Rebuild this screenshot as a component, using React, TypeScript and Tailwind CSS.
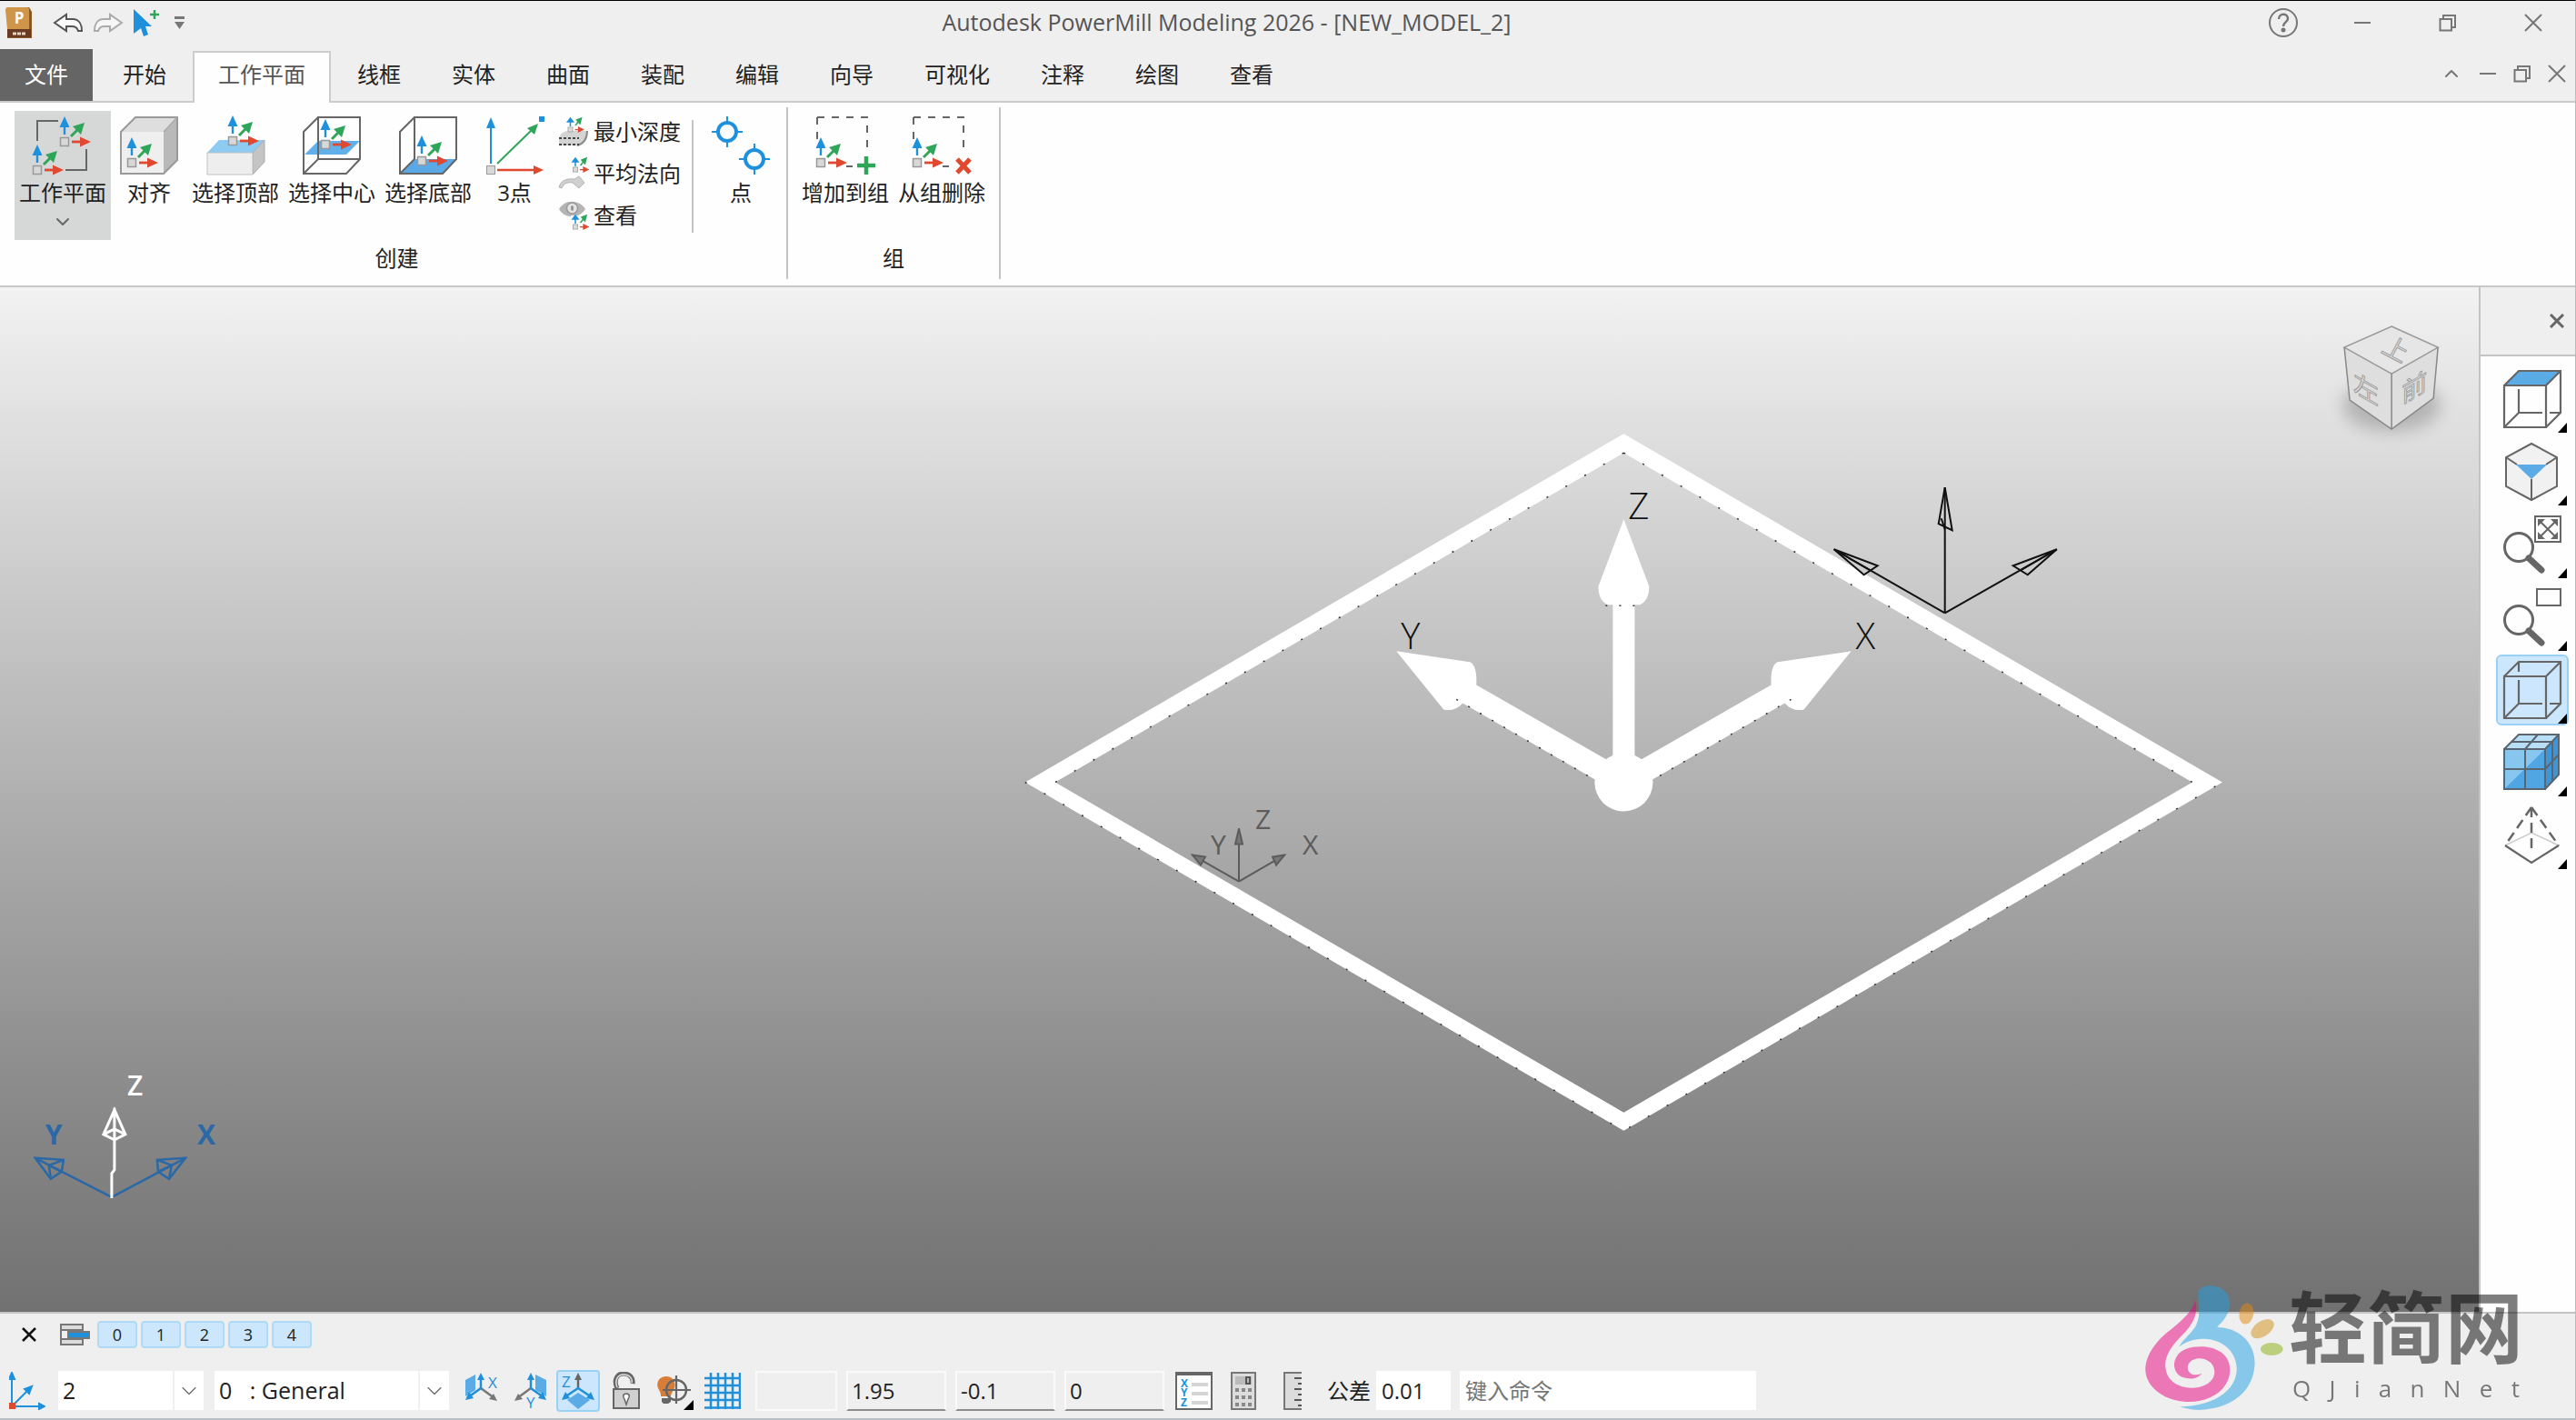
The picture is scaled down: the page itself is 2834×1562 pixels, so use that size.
import clsx from "clsx";
import { useState } from "react";
import type { ReactNode } from "react";
import { LuChevronDown, LuChevronUp } from "react-icons/lu";

const BLUE = "#1e90dc";
const GREEN = "#2fa55a";
const RED = "#e0492f";
const LINE = "#666666";

type IconProps = { children: ReactNode; size?: number };

const Icon = ({ children, size = 64 }: IconProps) => (
  <svg viewBox="0 0 64 64" width={size} height={size} fill="none" className="shrink-0 overflow-visible" aria-hidden="true">
    {children}
  </svg>
);

// origin square with the blue, green and red axis arrows
const Triad = ({ x, y }: { x: number; y: number }) => (
  <g transform={`translate(${x} ${y})`}>
    <path d="M0 -8V-18" stroke={BLUE} strokeWidth="2.4" />
    <path d="M-5.500 -16L0 -28L5.500 -16Z" fill={BLUE} />
    <path d="M7 -6L15 -14" stroke={GREEN} strokeWidth="3" />
    <path d="M9 -17L22 -21L18 -8Z" fill={GREEN} />
    <path d="M8 0H18" stroke={RED} strokeWidth="2.8" />
    <path d="M17 -5.500L29 0L17 5.500Z" fill={RED} />
    <rect x="-4.500" y="-4.500" width="9" height="9" fill="#d8d8d8" stroke="#999" strokeWidth="1.500" />
  </g>
);

const WorkplaneIcon = () => (
  <Icon>
    <path d="M27 5H4V27M58 36V59H35" stroke={LINE} strokeWidth="2" />
    <Triad x={34} y={28} />
    <Triad x={4} y={59} />
  </Icon>
);

const AlignIcon = () => (
  <Icon>
    <path d="M1 17L17 1H63L48 17Z" fill="#dedede" />
    <path d="M48 17L63 1V48L48 63Z" fill="#b9b9b9" />
    <path d="M1 17H48V63H1Z" fill="#efefef" />
    <path d="M1 17L17 1H63V48L48 63H1Z" stroke="#999" strokeWidth="2" />
    <path d="M48 17L63 1" stroke="#aaa" strokeWidth="1.500" />
    <Triad x={13} y={51} />
  </Icon>
);

const TopIcon = () => (
  <Icon>
    <path d="M1 40L14 26H64L51 40Z" fill="#8ecbf3" />
    <path d="M51 40L64 26V50L51 64Z" fill="#c4c4c4" stroke="#aaa" />
    <path d="M1 40H51V64H1Z" fill="#eeeeee" stroke="#c0c0c0" />
    <Triad x={29} y={27} />
  </Icon>
);

const BoxOutline = () => (
  <path d="M17 47V1H63V47L48 63H1V17L17 1M1 63L17 47H63" stroke={LINE} strokeWidth="2" />
);

const CentreIcon = () => (
  <Icon>
    <path d="M2 42L17 27H63L48 42Z" fill="#62b0ea" />
    <BoxOutline />
    <Triad x={25} y={31} />
  </Icon>
);

const BottomIcon = () => (
  <Icon>
    <path d="M2 63L17 47H63L48 63Z" fill="#5aa9e6" />
    <path d="M17 47V1H63V47L48 63H1V17L17 1M1 63L17 47" stroke={LINE} strokeWidth="2" />
    <Triad x={25} y={49} />
  </Icon>
);

const ThreePointIcon = () => (
  <Icon>
    <path d="M6 52V10" stroke={BLUE} strokeWidth="2" />
    <path d="M1 13L6 1L11 13Z" fill={BLUE} />
    <path d="M13 52L52 14" stroke={GREEN} strokeWidth="2" />
    <path d="M46 13L58 8L54 20Z" fill={GREEN} />
    <path d="M13 59H54" stroke={RED} strokeWidth="2.500" />
    <path d="M53 54L64 59L53 64Z" fill={RED} />
    <rect x="1.500" y="54.500" width="9" height="9" fill="#d8d8d8" stroke="#999" />
    <rect x="59" y="0" width="6" height="6" fill={BLUE} />
  </Icon>
);

const PointIcon = () => (
  <Icon>
    {[17, 47].map((c) => (
      <g key={c} stroke={BLUE}>
        <circle cx={c} cy={c} r="10" strokeWidth="4" />
        <path d={`M${c} ${c - 17}v8M${c} ${c + 9}v8M${c - 17} ${c}h8M${c + 9} ${c}h8`} strokeWidth="2" />
      </g>
    ))}
  </Icon>
);

const GroupFrame = () => (
  <>
    <path d="M1 1H56V42M1 1V28M33 55H40" stroke={LINE} strokeWidth="2" strokeDasharray="8 8" />
    <Triad x={5} y={51} />
  </>
);

const AddGroupIcon = () => (
  <Icon>
    <GroupFrame />
    <path d="M55 44V64M45 54H65" stroke={GREEN} strokeWidth="4.500" />
  </Icon>
);

const RemoveGroupIcon = () => (
  <Icon>
    <GroupFrame />
    <path d="M49 47L63 62M63 47L49 62" stroke={RED} strokeWidth="5" />
  </Icon>
);

const MiniTriad = ({ x, y }: { x: number; y: number }) => (
  <g transform={`translate(${x} ${y})`}>
    <path d="M0 -6V-18M-6 -16L0 -24L6 -16Z" stroke={BLUE} fill={BLUE} strokeWidth="3" />
    <path d="M11 -8L19 -18M14 -20L24 -24L21 -12Z" stroke={GREEN} fill={GREEN} strokeWidth="3" />
    <path d="M10 1H20M18 -4L28 1L18 6Z" stroke={RED} fill={RED} strokeWidth="2.500" />
    <rect x="-5" y="-4" width="10" height="10" fill="#ddd" stroke="#aaa" strokeWidth="2" />
  </g>
);

const MinDepthIcon = () => (
  <Icon size={32}>
    <path d="M2 48C4 36 12 30 24 30H64C64 46 56 58 42 62H2Z" fill="#d4d4d4" />
    <path d="M64 30C64 46 56 58 42 62" stroke="#8a8a8a" strokeWidth="4" />
    <path d="M2 46H46M2 60H46" stroke="#444" strokeWidth="4" strokeDasharray="6 4" />
    <MiniTriad x={27} y={26} />
  </Icon>
);

const AverageNormalIcon = () => (
  <Icon size={32}>
    <path d="M2 62C6 48 16 42 36 44L46 38L58 52L46 64L32 52C20 50 12 54 8 64Z" fill="#cfcfcf" stroke="#b5b5b5" strokeWidth="2" />
    <MiniTriad x={38} y={22} />
  </Icon>
);

const ViewIcon = () => (
  <Icon size={32}>
    <path d="M2 18C14 -4 46 -4 60 18C46 40 14 40 2 18Z" fill="#b4b4b4" />
    <circle cx="31" cy="16" r="12" fill="#e4e4e4" stroke="#999" strokeWidth="3" />
    <path d="M31 11V21" stroke="#888" strokeWidth="5" />
    <path d="M28 32H64V64H28Z" fill="#fefefe" />
    <MiniTriad x={38} y={56} />
  </Icon>
);

const WindowControl = ({ kind }: { kind: "minimize" | "restore" | "close" }) => (
  <svg viewBox="0 0 20 20" width="20" height="20" fill="none" stroke="#777" strokeWidth="2" aria-hidden="true">
    {kind === "minimize" && <path d="M1 10H19" />}
    {kind === "restore" && <path d="M1.500 6H14V18.500H1.500ZM5 6V2H18V15H14" />}
    {kind === "close" && <path d="M1 1L19 19M19 1L1 19" />}
  </svg>
);

const TitleBar = () => (
  <header className="flex h-[53px] shrink-0 items-center text-[#555]">
    <div className="flex h-full w-[204px] shrink-0 items-center pb-1.5 pl-1.5">
      <svg viewBox="0 0 30 34" width="30" height="34" aria-hidden="true">
        <path d="M2 2Q2 0 4 0H26L29 5V34H2Z" fill="#8a5a26" />
        <path d="M0 3Q0 0 3 0H24Q26 0 26 3V24H2Z" fill="#cf9548" />
        <rect x="2" y="24" width="26" height="9" fill="#6b3a22" />
        <path d="M8 29H22" stroke="#e6d5c3" strokeWidth="3" strokeDasharray="4 1" />
        <text x="15" y="18" textAnchor="middle" fill="#fff" className="font-['Open_Sans',sans-serif] text-[17px] font-bold">P</text>
      </svg>
      <button aria-label="撤销" className="ml-[22px]">
        <svg viewBox="0 0 34 22" width="34" height="22" fill="#fafafa" stroke="#555" strokeWidth="2">
          <path d="M2 11L15 2V7H22C29 7 32 13 32 20H28C27 16 24 15 21 15H15V20Z" />
        </svg>
      </button>
      <button aria-label="重做" className="ml-2.5">
        <svg viewBox="0 0 34 22" width="34" height="22" fill="#f6f6f6" stroke="#aaa" strokeWidth="2">
          <path d="M32 11L19 2V7H12C5 7 2 13 2 20H6C7 16 10 15 13 15H19V20Z" />
        </svg>
      </button>
      <button aria-label="选择" className="ml-2.5">
        <svg viewBox="0 0 30 32" width="30" height="32">
          <path d="M1 1L21 20H14L17 29L12 31L9 22L1 28Z" fill={BLUE} />
          <path d="M24 2V12M19 7H29" stroke={GREEN} strokeWidth="2.500" />
        </svg>
      </button>
      <button aria-label="自定义快速访问工具栏" className="ml-4">
        <svg viewBox="0 0 11 14" width="11" height="14" fill="#777">
          <path d="M0 0H11V3H0ZM0 6H11L5.500 14Z" />
        </svg>
      </button>
    </div>
    <h1 className="flex-1 pb-1.5 text-center text-[25px]">Autodesk PowerMill Modeling 2026 - [NEW_MODEL_2]</h1>
    <div className="flex h-full shrink-0 items-center pr-9 pb-1.5">
      <button aria-label="帮助">
        <svg viewBox="0 0 34 34" width="34" height="34" fill="none" stroke="#777" strokeWidth="2">
          <circle cx="17" cy="17" r="15" />
          <path d="M12 13C12 6 22 6 22 12.500C22 16 17 16.500 17 21" strokeWidth="2.500" />
          <circle cx="17" cy="25" r="1.500" fill="#666" />
        </svg>
      </button>
      <div className="ml-15 flex gap-[74px]">
        <button aria-label="最小化"><WindowControl kind="minimize" /></button>
        <button aria-label="还原"><WindowControl kind="restore" /></button>
        <button aria-label="关闭"><WindowControl kind="close" /></button>
      </div>
    </div>
  </header>
);

const tabs = ["开始", "工作平面", "线框", "实体", "曲面", "装配", "编辑", "向导", "可视化", "注释", "绘图", "查看"];

const TabStrip = () => {
  const [active, setActive] = useState("工作平面");
  return (
    <nav className="flex h-[59px] shrink-0 border-b-2 border-[#cccccc] text-2xl">
      <button className="w-[102px] shrink-0 bg-[#656565] pb-0.5 text-white">文件</button>
      <div className="ml-[5px] flex flex-1">
        {tabs.map((tab) => (
          <button
            key={tab}
            onClick={() => setActive(tab)}
            className={clsx("shrink-0 whitespace-nowrap", {
              "mx-px -mb-0.5 mt-0.5 border-2 border-b-0 border-[#cccccc] bg-[#fefefe] px-[26px] pb-2 text-[#555]": tab === active,
              "px-7 pb-0.5 text-[#222]": tab !== active,
            })}
          >
            {tab}
          </button>
        ))}
      </div>
      <div className="flex shrink-0 items-center gap-[18px] pr-2.5 pb-1">
        <button aria-label="折叠功能区"><LuChevronUp className="h-6 w-6 text-[#777]" /></button>
        <button aria-label="最小化窗口"><WindowControl kind="minimize" /></button>
        <button aria-label="还原窗口"><WindowControl kind="restore" /></button>
        <button aria-label="关闭窗口"><WindowControl kind="close" /></button>
      </div>
    </nav>
  );
};

type ToolProps = { label: string; icon: ReactNode; active?: boolean; menu?: boolean; className?: string };

const Tool = ({ label, icon, active, menu, className }: ToolProps) => (
  <button
    className={clsx("flex h-[142px] flex-col items-center whitespace-nowrap pt-1.5", className ?? "px-[5px]", {
      "bg-[#d6d8d8]": active,
    })}
  >
    {icon}
    <span className="mt-1 leading-8">{label}</span>
    {menu && <LuChevronDown className="mt-1 h-6 w-6 text-[#666]" />}
  </button>
);

const SmallTool = ({ label, icon }: ToolProps) => (
  <button className="flex h-[46px] items-center gap-[7px] whitespace-nowrap">
    {icon}
    {label}
  </button>
);

type GroupProps = { label: string; children: ReactNode; className?: string };

const RibbonGroup = ({ label, children, className }: GroupProps) => (
  <section className={clsx("flex flex-col border-r-2 border-[#c4c4c4] pt-1", className)}>
    <div className="flex">{children}</div>
    <div className="mt-1 text-center leading-8">{label}</div>
  </section>
);

const Ribbon = () => (
  <div className="flex h-[203px] shrink-0 items-start border-b-2 border-[#c8c8c8] bg-[#fefefe] py-[5px] text-2xl text-[#222]">
    <RibbonGroup label="创建" className="h-[189px] pr-2 pl-4">
      <Tool label="工作平面" icon={<WorkplaneIcon />} active menu />
      <Tool label="对齐" icon={<AlignIcon />} className="px-2.5" />
      <Tool label="选择顶部" icon={<TopIcon />} />
      <Tool label="选择中心" icon={<CentreIcon />} />
      <Tool label="选择底部" icon={<BottomIcon />} />
      <Tool label="3点" icon={<ThreePointIcon />} className="px-2.5" />
      <div className="ml-1.5 flex flex-col pr-3">
        <SmallTool label="最小深度" icon={<MinDepthIcon />} />
        <SmallTool label="平均法向" icon={<AverageNormalIcon />} />
        <SmallTool label="查看" icon={<ViewIcon />} />
      </div>
      <div className="mt-2.5 h-31 w-0.5 bg-[#c4c4c4]" />
      <Tool label="点" icon={<PointIcon />} className="ml-2.5 px-2.5" />
    </RibbonGroup>
    <RibbonGroup label="组" className="h-[189px] px-2.5">
      <Tool label="增加到组" icon={<AddGroupIcon />} />
      <Tool label="从组删除" icon={<RemoveGroupIcon />} />
    </RibbonGroup>
  </div>
);

const ViewCube = () => (
  <g>
    <ellipse cx="2630" cy="446" rx="54" ry="28" fill="#000" opacity="0.2" filter="url(#soft)" />
    <path d="M2630 359L2681 382L2676 438L2630 472L2584 440L2578 382Z" fill="#dedede" />
    <path d="M2630 359L2681 382L2630 411L2578 382Z" fill="#e6e6e6" stroke="#999" strokeWidth="1.500" />
    <path d="M2578 382L2584 440L2630 472L2676 438L2681 382M2630 411V472" fill="none" stroke="#888" strokeWidth="1.500" />
    <g fill="#dedede" stroke="#a0a0a0" strokeWidth="1" textAnchor="middle" className="font-['Noto_Sans_CJK_SC',sans-serif] text-[28px]">
      <text transform="translate(2630 393) rotate(28)">上</text>
      <text transform="translate(2602 438) skewY(30)">左</text>
      <text transform="translate(2655 436) skewY(-30)">前</text>
    </g>
  </g>
);

const Scene = () => (
  <svg viewBox="0 316 2727 1126" preserveAspectRatio="xMidYMid slice" className="block h-full w-full">
    <defs>
      <filter id="soft" x="-50%" y="-50%" width="200%" height="200%">
        <feGaussianBlur stdDeviation="9" />
      </filter>
    </defs>
    <g fill="none" stroke="#5c5c5c" strokeWidth="2">
      <path d="M1363 969V911M1363 969L1312 940M1363 969L1413 940" />
      <path d="M1363 911L1359 928L1367 928ZM1312 940L1326 942L1321 951ZM1413 940L1400 942L1404 951Z" fill="#777" />
    </g>
    <path
      fillRule="evenodd"
      fill="#fff"
      d="M1786 477L2444 860L1786 1243L1128 860ZM1786 498L2411 860L1786 1223L1161 860Z"
    />
    <g fill="none" stroke="#333" strokeWidth="1.500" strokeDasharray="2 22">
      <path d="M1786 498L2411 860M1786 498L1161 860" />
      <path d="M1128 860L1786 1243L2444 860" />
    </g>
    <g fill="#fff">
      <path d="M1786 571L1814 645Q1814 660 1804 665H1798V840H1774V665H1768Q1758 660 1758 645Z" />
      <path d="M1536 716L1617 728Q1625 732 1624 753L1786 846L1770 866L1609 773Q1600 783 1588 780Z" />
      <path d="M2036 716L1955 728Q1947 732 1948 753L1786 846L1802 866L1963 773Q1972 783 1984 780Z" />
      <circle cx="1786" cy="860" r="32" />
    </g>
    <g fill="none" stroke="#333" strokeWidth="1.500" strokeDasharray="2 13">
      <path d="M1602 769L1755 858M1970 769L1817 858M1766 666H1806" />
    </g>
    <g fill="none" stroke="#111" strokeWidth="2">
      <path d="M2139 674V536M2139 674L2017 604M2139 674L2262 604" />
      <path d="M2139 536L2132 576L2147 583ZM2135 570L2139 582" />
      <path d="M2017 604L2065 622L2050 632ZM2017 604L2057 627" />
      <path d="M2262 604L2214 622L2230 632ZM2262 604L2222 627" />
    </g>
    <g fill="none" stroke="#2a68a6" strokeWidth="2.500">
      <path d="M124 1316L40 1273M124 1316L205 1273" />
      <path d="M40 1273L71 1275L69 1288L57 1296ZM57 1296L55 1281L71 1275M55 1281L69 1288" />
      <path d="M205 1273L174 1275L175 1288L187 1296ZM187 1296L190 1281L174 1275M190 1281L175 1288" />
    </g>
    <path d="M124 1317V1290L127 1286V1218M127 1220L115 1247L127 1253L139 1247ZM115 1247L127 1241L139 1247" fill="none" stroke="#fff" strokeWidth="3" />
    <g className="font-['Open_Sans',sans-serif] text-[40px] font-light" fill="#111">
      <text x="1791" y="571">Z</text>
      <text x="1541" y="714">Y</text>
      <text x="2041" y="714">X</text>
    </g>
    <g className="font-['Open_Sans',sans-serif] text-[30px]" fill="#5c5c5c">
      <text x="1381" y="911">Z</text>
      <text x="1332" y="939">Y</text>
      <text x="1433" y="939">X</text>
    </g>
    <g className="font-['Open_Sans',sans-serif] text-[30px] font-bold" fill="#2a68a6">
      <text x="141" y="1204" fill="#fff" className="font-semibold">Z</text>
      <text x="51" y="1258">Y</text>
      <text x="218" y="1258">X</text>
    </g>
    <ViewCube />
  </svg>
);

const CubeFrame = () => (
  <path d="M1 17H47V63H1ZM1 17L17 1H63V47L47 63M47 17L63 1M1 63L17 47M17 21V47H43M51 47H63" stroke={LINE} strokeWidth="2.200" />
);

const Magnifier = ({ children }: { children: ReactNode }) => (
  <Icon>
    <circle cx="17" cy="35" r="15.500" stroke={LINE} strokeWidth="3" />
    <path d="M28 47L42 60" stroke={LINE} strokeWidth="7" strokeLinecap="round" />
    {children}
  </Icon>
);

const viewTools = [
  {
    label: "顶部视图",
    icon: (
      <Icon>
        <path d="M1 17L17 1H63L47 17Z" fill="#5aabe6" />
        <CubeFrame />
      </Icon>
    ),
  },
  {
    label: "等轴视图",
    icon: (
      <Icon>
        <path d="M31 1L59 16V48L31 63L3 48V16Z" fill="#f1f1f1" stroke={LINE} strokeWidth="2" />
        <path d="M3 16L15 24M59 16L47 24M31 40V63" stroke={LINE} strokeWidth="2" />
        <path d="M14 24H48L31 40Z" fill="#5aabe6" />
      </Icon>
    ),
  },
  {
    label: "全部缩放",
    icon: (
      <Magnifier>
        <rect x="35" y="1" width="28" height="28" stroke={LINE} strokeWidth="2" />
        <path d="M40 6L58 24M58 6L40 24" stroke={LINE} strokeWidth="2" />
        <path d="M38 4H46L38 12ZM60 4V12L52 4ZM38 26V18L46 26ZM60 26H52L60 18Z" fill={LINE} />
      </Magnifier>
    ),
  },
  {
    label: "方框缩放",
    icon: (
      <Magnifier>
        <rect x="37" y="1" width="26" height="18" stroke={LINE} strokeWidth="2" />
      </Magnifier>
    ),
  },
  {
    label: "线框显示",
    icon: (
      <Icon>
        <path d="M17 1V12" stroke={LINE} strokeWidth="2.200" />
        <CubeFrame />
      </Icon>
    ),
  },
  {
    label: "阴影显示",
    icon: (
      <Icon>
        <path d="M1 17L17 1H61L46 17Z" fill="#b9dff7" />
        <path d="M46 17L61 1V45L46 61Z" fill="#3d96d8" />
        <path d="M1 17H46V61H1Z" fill="#4fa6e3" />
        <path d="M1 17H46L1 61Z" fill="#86c6ef" />
        <path d="M1 17H46V61H1ZM1 17L17 1H61V45L46 61M46 17L61 1M9 9H54V53M1 39H46L61 23M24 61V17L38 1" stroke="#5a6570" strokeWidth="2" />
      </Icon>
    ),
  },
  {
    label: "透视",
    icon: (
      <Icon>
        <path d="M2 43L31 29L61 43" stroke="#ccc" strokeWidth="1.500" />
        <path d="M2 43L31 62L61 43" stroke={LINE} strokeWidth="2.200" />
        <path d="M31 1L2 43M31 1L61 43M31 1V52" stroke={LINE} strokeWidth="2.500" strokeDasharray="11 6" />
      </Icon>
    ),
  },
];

const ViewPanel = () => {
  const [display, setDisplay] = useState("线框显示");
  return (
    <aside className="flex w-[106px] shrink-0 flex-col border-l-2 border-[#c4c4c4] bg-[#fefefe]">
      <div className="flex h-[76px] items-center justify-end border-b-2 border-[#c4c4c4] bg-[#efefef] pr-3">
        <button aria-label="关闭面板">
          <svg viewBox="0 0 16 16" width="16" height="16" stroke="#666" strokeWidth="3"><path d="M1 1L15 15M15 1L1 15" /></svg>
        </button>
      </div>
      <div className="flex flex-col items-end gap-0.5 pt-2 pr-[7px]">
        {viewTools.map(({ label, icon }) => (
          <button
            key={label}
            aria-label={label}
            onClick={() => setDisplay(label)}
            className={clsx("relative flex h-[78px] w-20 items-center justify-center rounded-md border-2", {
              "border-[#99d1f5] bg-[#cce7fd]": label === display,
              "border-transparent": label !== display,
            })}
          >
            {icon}
            <svg viewBox="0 0 10 11" width="10" height="11" className="absolute right-0 bottom-0"><path d="M10 0V11H0Z" /></svg>
          </button>
        ))}
      </div>
    </aside>
  );
};

const LevelBar = () => (
  <div className="flex h-12 items-center pb-0.5 pl-6">
    <button aria-label="关闭层栏" className="mr-[26px]">
      <svg viewBox="0 0 16 16" width="16" height="16" stroke="#111" strokeWidth="2.500"><path d="M1 1L15 15M15 1L1 15" /></svg>
    </button>
    <button aria-label="层" className="mr-2">
      <svg viewBox="0 0 33 24" width="33" height="24" stroke="#777" strokeWidth="2">
        <path d="M1 1H25V7H1ZM1 17H25V23H1ZM1 7V17" fill="#ddd" />
        <path d="M9 9H32V16H9Z" fill={BLUE} />
      </svg>
    </button>
    <div className="flex gap-1">
      {[0, 1, 2, 3, 4].map((level) => (
        <button
          key={level}
          className="h-[30px] w-11 rounded-sm border-2 border-[#b0daf6] bg-[#cce6fb] text-lg leading-6 font-medium text-[#222]"
        >
          {level}
        </button>
      ))}
    </div>
  </div>
);

type ComboProps = { label: string; value: string; className: string };

const Combo = ({ label, value, className }: ComboProps) => (
  <div className={clsx("relative h-[43px] shrink-0 bg-white", className)}>
    <select aria-label={label} className="h-full w-full appearance-none pr-9 pl-[5px] text-[25px] outline-none">
      <option>{value}</option>
    </select>
    <span className="pointer-events-none absolute inset-y-0 right-0 flex w-[34px] items-center justify-center border-l-2 border-[#f0f0f0]">
      <LuChevronDown className="h-7 w-7 stroke-1 text-[#666]" />
    </span>
  </div>
);

const CoordInput = ({ label, value }: { label: string; value: string }) => (
  <input
    aria-label={label}
    defaultValue={value}
    className="h-11 w-[110px] shrink-0 border-2 border-[#fafafa] border-b-[#8c8c8c] bg-[#efefef] pl-1 outline-none"
  />
);

const planeIcons = [
  {
    label: "X 平面",
    icon: (
      <svg viewBox="0 0 40 42" width="40" height="42" fill="none" className="overflow-visible">
        <path d="M2 9L13 3V20L2 27Z" fill="#5aabe6" />
        <path d="M19 18L34 29" stroke="#777" strokeWidth="2.500" />
        <path d="M37 32L28 30L33 24Z" fill="#777" />
        <path d="M19 5V18L5 28" stroke={BLUE} strokeWidth="2.500" />
        <path d="M15 9L19 1L23 9ZM2 31L6 22L11 29Z" fill={BLUE} />
        <text x="27" y="18" fill={BLUE} className="text-[17px]">X</text>
      </svg>
    ),
  },
  {
    label: "Y 平面",
    icon: (
      <svg viewBox="0 0 40 42" width="40" height="42" fill="none" className="overflow-visible">
        <path d="M38 9L26 3V20L38 27Z" fill="#5aabe6" />
        <path d="M21 18L6 29" stroke="#777" strokeWidth="2.500" />
        <path d="M3 32L12 30L7 24Z" fill="#777" />
        <path d="M21 5V18L35 28" stroke={BLUE} strokeWidth="2.500" />
        <path d="M17 9L21 1L25 9ZM38 31L34 22L29 29Z" fill={BLUE} />
        <text x="16" y="40" fill={BLUE} className="text-[17px]">Y</text>
      </svg>
    ),
  },
  {
    label: "Z 平面",
    icon: (
      <svg viewBox="0 0 40 42" width="40" height="42" fill="none" className="overflow-visible">
        <path d="M20 23L33 31L20 41L8 31Z" fill="#5aabe6" />
        <path d="M20 4V19" stroke="#666" strokeWidth="2.500" />
        <path d="M16 9L20 1L24 9Z" fill="#666" />
        <path d="M5 28L20 18L35 28" stroke={BLUE} strokeWidth="2.500" />
        <path d="M2 31L6 22L11 29ZM38 31L34 22L29 29Z" fill={BLUE} />
        <text x="2" y="17" fill={BLUE} className="text-[17px]">Z</text>
      </svg>
    ),
  },
  {
    label: "锁定",
    icon: (
      <svg viewBox="0 0 32 42" width="32" height="42" fill="none" stroke="#666">
        <path d="M6 18C2 10 5 2 13 2C20 2 24 7 23 13" strokeWidth="5" />
        <path d="M6 17C3 10 6 3 13 3C20 3 23 8 22 12" stroke="#ddd" strokeWidth="1.500" />
        <rect x="2" y="19" width="28" height="21" fill="#d0d0d0" strokeWidth="2" />
        <path d="M16 24C12 24 12 28 14 30L16 36L18 30C20 28 20 24 16 24Z" fill="#fff" strokeWidth="1.500" />
      </svg>
    ),
  },
  {
    label: "智能光标",
    icon: (
      <svg viewBox="0 0 42 42" width="42" height="42" fill="none">
        <path d="M12 5C3 5 0 14 4 20C6 23 6 25 6 27H17C17 25 18 23 20 20C24 13 20 5 12 5Z" fill="#d97d36" />
        <path d="M7 29H17V33L14 35H9L7 33Z" fill="#666" />
        <circle cx="23" cy="20" r="11" stroke="#666" strokeWidth="2.500" />
        <path d="M23 4V35M8 20H39" stroke="#666" strokeWidth="2.200" />
        <path d="M42 31V42H31Z" fill="#000" />
      </svg>
    ),
  },
  {
    label: "栅格",
    icon: (
      <svg viewBox="0 0 40 42" width="40" height="42" stroke={BLUE} strokeWidth="2.500">
        <path d="M7 1V41M15 1V41M23 1V41M31 1V41M39 1V41M0 7H40M0 15H40M0 23H40M0 31H40M0 39.500H40" />
      </svg>
    ),
  },
];

const StatusBar = () => {
  const [plane, setPlane] = useState("Z 平面");
  return (
    <div className="mt-2 flex h-[61px] items-center border-b-2 border-[#b8c0c6] pb-0.5 pl-2.5 text-2xl text-[#222]">
      <svg viewBox="0 0 40 42" width="40" height="42" fill="none" stroke={BLUE} strokeWidth="2" className="shrink-0" aria-hidden="true">
        <path d="M3 38V5M3 38H36M3 38L22 19" />
        <path d="M0 8L3 1L6 8ZM33 35L39 38L33 41ZM17 19L25 16L22 24Z" fill={BLUE} />
        <rect x="0" y="34" width="7" height="7" fill={RED} stroke="none" />
      </svg>
      <Combo label="工作平面" value="2" className="ml-3.5 w-[160px]" />
      <Combo label="当前层" value={"0\u00a0\u00a0 : General"} className="ml-3 w-[258px]" />
      <div className="ml-3 flex shrink-0 gap-[5px]">
        {planeIcons.map(({ label, icon }) => (
          <button
            key={label}
            aria-label={label}
            onClick={() => setPlane(label)}
            className={clsx("flex h-[46px] w-12 items-center justify-center rounded-sm border-2", {
              "border-[#99d1f5] bg-[#cce7fd]": label === plane,
              "border-transparent": label !== plane,
            })}
          >
            {icon}
          </button>
        ))}
      </div>
      <input aria-label="栅格间距" disabled className="ml-3 h-11 w-[90px] shrink-0 border-2 border-[#fafafa] bg-[#efefef]" />
      <div className="ml-2.5 flex gap-2.5">
        <CoordInput label="X" value="1.95" />
        <CoordInput label="Y" value="-0.1" />
        <CoordInput label="Z" value="0" />
      </div>
      <button aria-label="坐标输入" className="ml-3 shrink-0">
        <svg viewBox="0 0 41 42" width="41" height="42">
          <rect x="1" y="1" width="39" height="40" fill="#fff" stroke="#666" strokeWidth="2" />
          <path d="M0 2H41" stroke="#666" strokeWidth="4" />
          <path d="M18 14H36M18 24H36M18 34H36" stroke="#d5d5d5" strokeWidth="4" />
          <g fill={BLUE} className="text-[12px] font-bold">
            <text x="6" y="17">X</text>
            <text x="6" y="27">Y</text>
            <text x="6" y="38">Z</text>
          </g>
        </svg>
      </button>
      <button aria-label="计算器" className="ml-5 shrink-0">
        <svg viewBox="0 0 28 42" width="28" height="42">
          <rect x="1" y="1" width="26" height="40" fill="#dcdcdc" stroke="#777" strokeWidth="2" />
          <path d="M5 5H23V14H5Z" fill="#bbb" />
          <path d="M17 6H21V13H17Z" fill="none" stroke="#555" strokeWidth="2" />
          <path d="M5 20H24M5 28H24M5 36H24" stroke="#888" strokeWidth="4" strokeDasharray="4 3" />
        </svg>
      </button>
      <button aria-label="测量" className="ml-[30px] shrink-0">
        <svg viewBox="0 0 20 42" width="20" height="42">
          <rect width="19" height="42" fill="#dcdcdc" />
          <path d="M20 1H1V41H20" fill="none" stroke="#777" strokeWidth="2" />
          <path d="M12 7H20M16 13H20M12 19H20M16 25H20M12 31H20M16 37H20" stroke="#555" strokeWidth="2" />
        </svg>
      </button>
      <label htmlFor="tolerance" className="ml-7 shrink-0">公差</label>
      <input id="tolerance" defaultValue="0.01" className="ml-1.5 h-[43px] w-[82px] shrink-0 bg-white pl-1.5 outline-none" />
      <input
        aria-label="命令"
        placeholder="键入命令"
        className="ml-2.5 h-[43px] w-[326px] shrink-0 bg-white pl-1.5 outline-none placeholder:text-[#777]"
      />
    </div>
  );
};

const Watermark = () => (
  <div className="pointer-events-none absolute right-[57px] bottom-[7px] z-10 flex items-end gap-1 opacity-50">
    <svg viewBox="60 20 155 145" width="155" height="145" aria-hidden="true">
      <g transform="scale(0.3406 0.3333)">
        <path
          fill="#e9017f"
          d="M340 120C350 150 345 190 300 235C260 275 240 310 245 345C250 390 290 410 330 410C375 410 405 385 403 355C401 325 375 312 350 313C325 315 312 335 318 352C325 370 345 370 362 362C350 380 325 383 300 375C275 365 265 335 280 308C295 280 330 273 365 274C425 278 455 310 453 355C450 415 390 460 310 456C230 450 178 400 180 345C183 290 230 240 265 215C300 185 335 155 340 120Z"
        />
        <path
          fill="#21a1e5"
          d="M350 95C355 70 400 65 430 85C460 105 455 150 440 175C432 190 415 205 412 210C480 210 535 260 533 330C530 420 460 480 350 483C325 482 305 477 290 472C400 470 475 420 475 345C473 290 430 250 370 248C335 247 310 258 288 275C300 250 335 225 345 200C360 165 350 130 350 95Z"
        />
        <ellipse cx="506" cy="165" rx="23" ry="35" fill="#e58a10" transform="rotate(8 506 165)" />
        <ellipse cx="558" cy="215" rx="42" ry="25" fill="#d5911a" transform="rotate(-35 558 215)" />
        <ellipse cx="588" cy="282" rx="36" ry="21" fill="#89b110" />
      </g>
    </svg>
    <div className="text-black">
      <div className="mb-3 font-['Noto_Sans_CJK_SC',sans-serif] text-[86px] leading-[86px] font-bold">轻简网</div>
      <div className="mb-3 flex justify-between px-1 text-[26px] leading-8" aria-label="QJianNet">
        {Array.from("QJianNet").map((letter, i) => (
          <span key={i}>{letter}</span>
        ))}
      </div>
    </div>
  </div>
);

const App = () => (
  <div className="relative flex h-screen flex-col overflow-hidden border-t border-r border-t-black border-r-[#bbbbbb] bg-[#efefef] font-['Open_Sans','Noto_Sans_CJK_SC',sans-serif]">
    <TitleBar />
    <TabStrip />
    <Ribbon />
    <main className="flex min-h-0 flex-1">
      <div className="min-w-0 flex-1 bg-linear-to-b from-[#f2f2f2] to-[#717171]">
        <Scene />
      </div>
      <ViewPanel />
    </main>
    <footer className="shrink-0 border-t-2 border-[#c4c4c4]">
      <LevelBar />
      <StatusBar />
    </footer>
    <Watermark />
  </div>
);

export default App;
